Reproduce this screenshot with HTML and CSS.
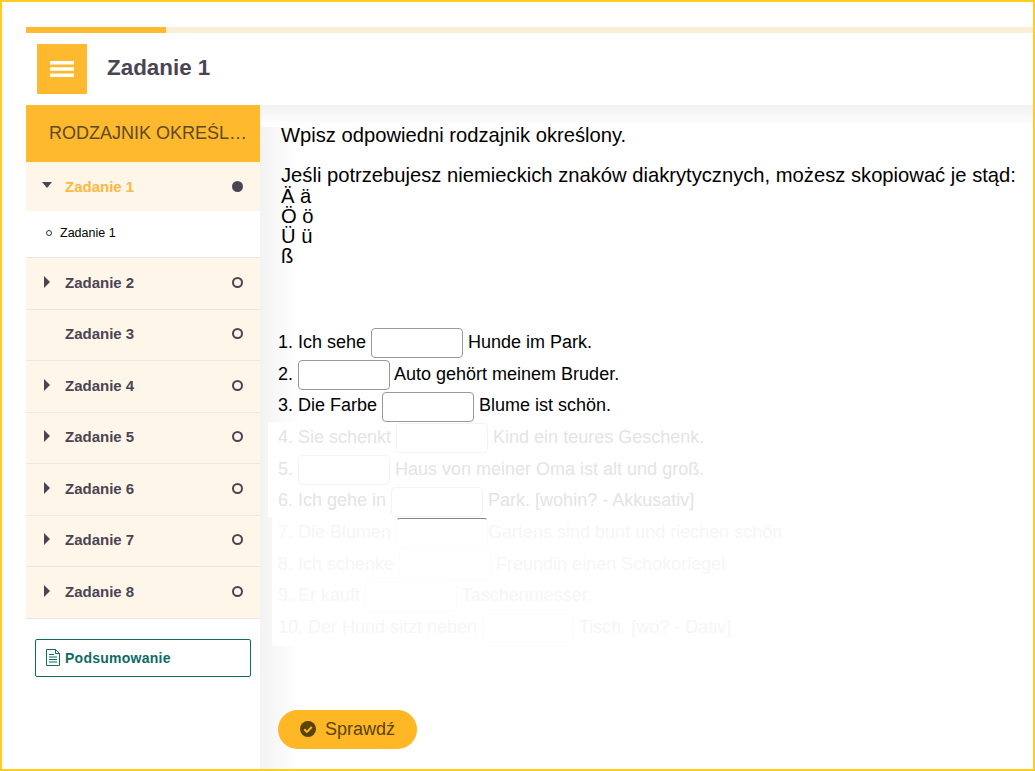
FILE: index.html
```html
<!DOCTYPE html>
<html lang="pl">
<head>
<meta charset="utf-8">
<title>Zadanie 1</title>
<link rel="stylesheet" href="styles.css">
</head>
<body>
<div class="frame">
  <div class="progress"><div class="progress-fill"></div></div>
  <header class="topbar">
    <button class="menu-btn" aria-label="Menu">
      <svg width="24" height="16" viewBox="0 0 24 16"><path d="M0 0h24v3.4H0zM0 6.3h24v3.4H0zM0 12.6h24V16H0z" fill="#fff"/></svg>
    </button>
    <h1 class="page-title">Zadanie 1</h1>
  </header>
  <div class="layout">
    <aside class="sidebar">
      <div class="side-title"><span class="side-title-text">RODZAJNIK OKREŚLONY</span></div>
      <div class="item item-first active">
        <svg class="caret" width="10" height="6" viewBox="0 0 10 6"><path d="M0 0h10L5 6z" fill="#4b4453"/></svg>
        <span class="item-name">Zadanie 1</span><span class="dot dot-full"></span>
      </div>
      <div class="subitem"><span class="bullet"></span>Zadanie 1</div>
      <div class="item"><svg class="caret" width="10" height="12" viewBox="0 0 10 12"><path d="M2 0l6 6-6 6z" fill="#4b4453"/></svg><span class="item-name">Zadanie 2</span><span class="dot"></span></div>
      <div class="item"><span class="caret-gap"></span><span class="item-name">Zadanie 3</span><span class="dot"></span></div>
      <div class="item"><svg class="caret" width="10" height="12" viewBox="0 0 10 12"><path d="M2 0l6 6-6 6z" fill="#4b4453"/></svg><span class="item-name">Zadanie 4</span><span class="dot"></span></div>
      <div class="item"><svg class="caret" width="10" height="12" viewBox="0 0 10 12"><path d="M2 0l6 6-6 6z" fill="#4b4453"/></svg><span class="item-name">Zadanie 5</span><span class="dot"></span></div>
      <div class="item"><svg class="caret" width="10" height="12" viewBox="0 0 10 12"><path d="M2 0l6 6-6 6z" fill="#4b4453"/></svg><span class="item-name">Zadanie 6</span><span class="dot"></span></div>
      <div class="item"><svg class="caret" width="10" height="12" viewBox="0 0 10 12"><path d="M2 0l6 6-6 6z" fill="#4b4453"/></svg><span class="item-name">Zadanie 7</span><span class="dot"></span></div>
      <div class="item"><svg class="caret" width="10" height="12" viewBox="0 0 10 12"><path d="M2 0l6 6-6 6z" fill="#4b4453"/></svg><span class="item-name">Zadanie 8</span><span class="dot"></span></div>
      <a class="summary">
        <svg class="summary-icon" width="14" height="17" viewBox="0 0 14 17" fill="none" stroke="#0f6b66" stroke-width="1"><path d="M.5.5h9l4 4v12H.5zM9.5.5v4h4"/><path d="M3 5.5h5M3 8h8M3 10.500h8M3 13h8"/></svg>
        <span>Podsumowanie</span>
      </a>
    </aside>
    <main class="content">
      <p class="lead">Wpisz odpowiedni rodzajnik określony.</p>
      <p class="hint"><span class="hint-first">Jeśli potrzebujesz niemieckich znaków diakrytycznych, możesz skopiować je stąd:</span>Ä ä<br>Ö ö<br>Ü ü<br>ß</p>
      <div class="rows">
        <div class="row">1. Ich sehe <input class="gap" type="text"> Hunde im Park.</div>
        <div class="row">2. <input class="gap" type="text"> Auto gehört meinem Bruder.</div>
        <div class="row">3. Die Farbe <input class="gap" type="text"> Blume ist schön.</div>
        <div class="veil veil-a">
          <div class="row">4. Sie schenkt <input class="gap" type="text"> Kind ein teures Geschenk.</div>
          <div class="row">5. <input class="gap" type="text"> Haus von meiner Oma ist alt und groß.</div>
          <div class="row">6. Ich gehe in <input class="gap" type="text"> Park. [wohin? - Akkusativ]</div>
        </div>
        <div class="veil veil-b">
          <div class="row">7. Die Blumen <input class="gap gap-edge" type="text">Gartens sind bunt und riechen schön</div>
          <div class="row">8. Ich schenke <input class="gap" type="text"> Freundin einen Schokoriegel</div>
          <div class="row">9. Er kauft <input class="gap" type="text"> Taschenmesser.</div>
          <div class="row">10. Der Hund sitzt neben <input class="gap" type="text"> Tisch. [wo? - Dativ]</div>
        </div>
      </div>
      <button class="check">
        <svg width="16" height="16" viewBox="0 0 16 16"><circle cx="8" cy="8" r="8" fill="#5a4208"/><path d="M4.200 8.200l2.700 2.700 4.900-4.900" fill="none" stroke="#ffb726" stroke-width="2"/></svg>
        <span>Sprawdź</span>
      </button>
    </main>
  </div>
</div>
</body>
</html>
```
FILE: styles.css
```css
* { box-sizing: border-box; }
html, body { margin: 0; height: 100%; }
body { font-family: "Liberation Sans", Arial, sans-serif; color: #000; background: #fff; overflow: hidden; }
.frame { width: 1035px; height: 771px; border: 2px solid #ffcc22; padding: 25px 0 0 24px; display: flex; flex-direction: column; overflow: hidden; }
.progress { height: 6px; background: #fbeed6; flex: none; }
.progress-fill { width: 140px; height: 100%; background: #ffb92e; }
.topbar { height: 72px; flex: none; display: flex; align-items: center; padding-left: 11px; gap: 20px; }
.menu-btn { width: 50px; height: 50px; border: 0; padding: 0; background: #ffb92e; border-radius: 1px; display: flex; align-items: center; justify-content: center; }
.page-title { margin: -2px 0 0; font-size: 22.400px; font-weight: 700; color: #4b4453; }
.layout { flex: 1; display: flex; min-height: 0; }
.sidebar { width: 234px; flex: none; background: #fff; }
.side-title { height: 57px; background: #ffb92e; padding: 0 12px 1px 23px; display: flex; align-items: center; font-size: 18px; color: #5e4a23; }
.side-title-text { display: block; white-space: nowrap; overflow: hidden; text-overflow: ellipsis; }
.item { height: 51.500px; display: flex; align-items: center; background: #fff6ea; border-bottom: 1px solid #ece7e3; padding: 0 17px 2px 16px; font-size: 15px; font-weight: 700; color: #4b4453; }
.item-first { height: 49px; border-bottom: 0; padding-bottom: 0; }
.caret { flex: none; margin: -1px 13px 0 0; display: block; }
.item-first .caret { margin-top: -3px; }
.caret-gap { width: 23px; flex: none; }
.item-name { flex: 1; }
.active .item-name { color: #ffb73f; }
.dot { width: 11px; height: 11px; border-radius: 50%; border: 2px solid #4b4453; flex: none; }
.dot-full { background: #4b4453; }
.subitem { height: 47px; display: flex; align-items: center; padding: 0 0 2px 20px; gap: 8px; font-size: 12.500px; border-bottom: 1px solid #ece7e3; background: #fff; }
.bullet { width: 6px; height: 6px; border-radius: 50%; border: 1px solid #333; }
.summary { margin: 20.500px 9px 0; height: 38px; display: flex; align-items: center; gap: 5px; padding: 0 0 0 10px; border: 1px solid #0f6b66; border-radius: 2px; color: #0f6b66; font-size: 14px; font-weight: 700; letter-spacing: .25px; }
.summary-icon { margin-top: -2px; }
.content { flex: 1; min-width: 0; padding: 19px 0 0 19px; background: linear-gradient(to bottom, #f1f1f1, #fff 22px) top left / 100% 22px no-repeat, linear-gradient(to right, #f3f3f3, #fff 40px) top left / 40px 100% no-repeat, #fff; }
.lead, .hint { margin: 0 0 0 2px; font-size: 20.200px; }
.lead { line-height: 23px; margin-bottom: 15px; }
.hint { line-height: 20px; margin-bottom: 61px; padding-top: 3px; }
.hint-first { display: block; margin-bottom: 1px; }
.rows { font-size: 18px; margin-left: -1px; }
.row { height: 31.670px; line-height: 31.670px; white-space: nowrap; }
.gap { width: 92px; height: 30px; padding: 0; border: 1px solid #999; border-radius: 4px; background: #fff; vertical-align: middle; }
.veil { background: #fff; }
.veil .gap { border-color: #f3f3f3; }
.veil-a { margin-left: -10px; padding-left: 10px; color: #e4e4e4; }
.veil-b { margin-left: -6px; padding: 0 0 2px 6px; color: #f6f6f6; }
.veil-b .gap { border-color: #fcfcfc; }
.veil-b .gap-edge { border-top-color: #888; }
.check { margin: 64px 0 0 -1px; height: 39px; width: 139px; border: 0; border-radius: 20px; background: #ffb726; color: #5a4208; font: 18px "Liberation Sans", Arial, sans-serif; display: flex; align-items: center; justify-content: center; gap: 9px; padding: 0; }
```
